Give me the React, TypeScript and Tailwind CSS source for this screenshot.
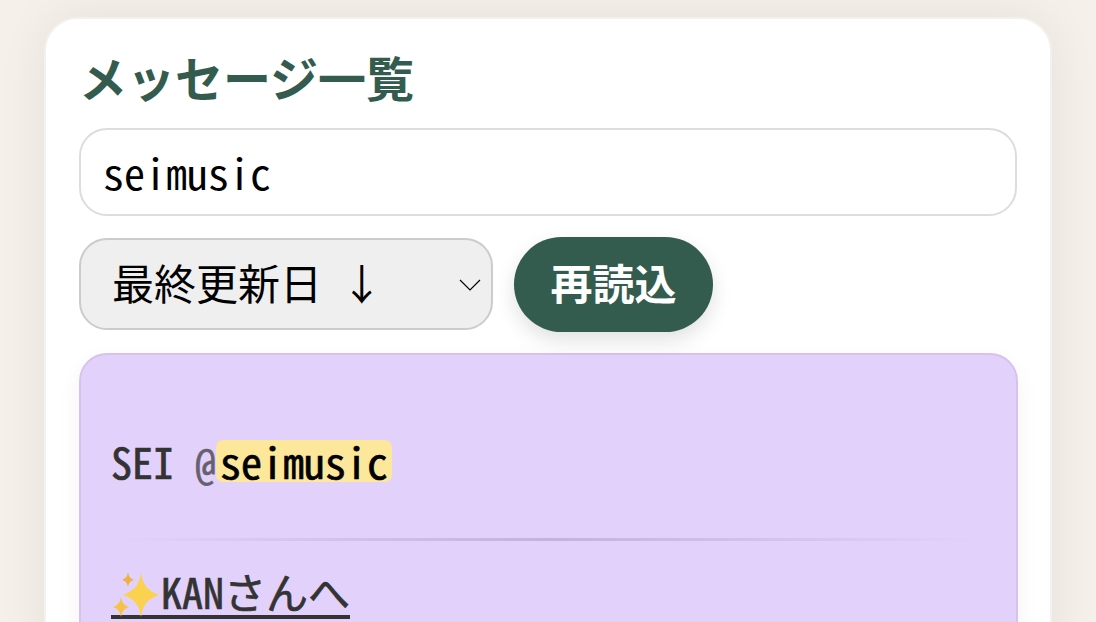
const mono = { fontFamily: '"Noto Sans Mono CJK JP", "Noto Sans CJK JP", monospace' };

const Sparkles = () => (
  <svg viewBox="0 0 50 50" className="inline-block w-[50px] h-[50px] align-[-12px]">
    <path d="M30 2 C32 14 36 19 48 24 C36 28 32 34 30 46 C28 34 24 28 12 24 C24 19 28 14 30 2Z" fill="#fbd24f" />
    <path d="M17 1 C18 6 19 7 23 9 C19 10 18 12 17 16 C16 12 15 10 11 9 C15 7 16 6 17 1Z" fill="#eeb042" />
    <path d="M10 26 C11 32 13 34 18 36 C13 38 11 40 10 46 C9 40 7 38 2 36 C7 34 9 32 10 26Z" fill="#f6c244" />
  </svg>
);

export default function App() {
  return (
    <div className="h-[622px] overflow-hidden bg-[#f5f0e9] pt-[17px] px-[44px]">
      <div className="h-[700px] bg-white border-2 border-[#f3f1ed] rounded-t-[34px] shadow-[0_0_50px_rgba(0,0,0,0.07)] px-[33px] pt-[29px] font-['Noto_Sans_CJK_JP',sans-serif]">
        <h2 className="text-[48px] leading-[56px] font-bold text-[#335c4f] mb-[24px]">メッセージ一覧</h2>
        <input
          readOnly
          value="seimusic"
          style={mono}
          className="block w-[938px] h-[88px] border-2 border-[#dddddd] rounded-[28px] pl-[22px] pb-[2px] text-[42px] text-black bg-white outline-none"
        />
        <div className="flex items-start gap-[21px] mt-[21px]">
          <div className="relative w-[414px] h-[92px] mt-px">
            <select className="w-full h-full appearance-none bg-[#efefef] border-2 border-[#cccccc] rounded-[28px] pl-[31px] pb-[6px] text-[42px] text-black">
              <option>最終更新日{'\u00a0 '}↓</option>
            </select>
            <svg viewBox="0 0 24 14" className="absolute right-[11px] top-[40px] w-[24px] h-[14px]" fill="none" stroke="black" strokeWidth="1.2">
              <path d="M2 2 L12 12 L22 2" />
            </svg>
          </div>
          <button className="w-[199px] h-[95px] rounded-full bg-[#335c4f] text-white text-[42px] leading-none pb-[6px] font-bold shadow-[0_8px_20px_rgba(0,0,0,0.12)]">
            再読込
          </button>
        </div>
        <div className="w-[939px] mt-[21px] h-[400px] bg-[#e2d1fb] border-2 border-[#d5c3ec] rounded-[28px] shadow-[0_8px_24px_rgba(0,0,0,0.05)] px-[30px] pt-[85px]">
          <p style={mono} className="text-[42px] leading-[42px] text-[#333333] [-webkit-text-stroke:0.7px]">
            SEI <span className="text-[#66606e]">@</span>
            <span className="inline-block h-[42px] px-[4px] bg-[#fde79b] text-black rounded-[7px]">seimusic</span>
          </p>
          <div className="h-[3px] mt-[56px] mx-[10px] bg-gradient-to-r from-transparent via-[#c5b2dc] to-transparent" />
          <p className="mt-[26px]">
            <span style={mono} className="inline-block h-[52px] leading-[48px] text-[42px] text-[#333333] border-b-[4px] border-[#333333] [-webkit-text-stroke:0.7px]">
              <Sparkles />
              KANさんへ
            </span>
          </p>
        </div>
      </div>
    </div>
  );
}
